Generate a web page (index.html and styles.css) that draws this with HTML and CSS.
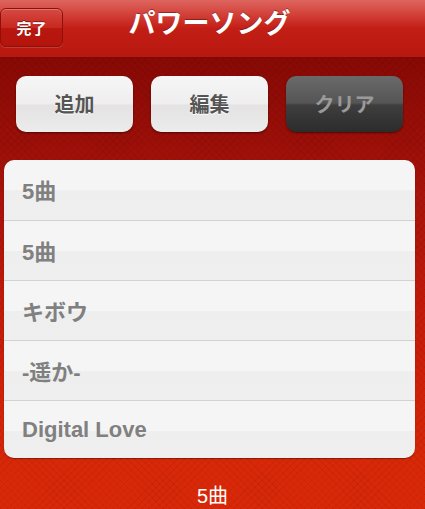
FILE: index.html
```html
<!DOCTYPE html>
<html>
<head>
    <meta name="viewport" content="width=device-width, initial-scale=1.0">
    <title>パワーソング</title>
    <link rel="stylesheet" href="styles.css">
</head>
<body>
    <div class="navbar">
        <a class="done">完了</a>
        <h1 class="title">パワーソング</h1>
    </div>

    <div class="main">
        <div class="tools">
            <a class="btn">追加</a>
            <a class="btn">編集</a>
            <a class="btn dark">クリア</a>
        </div>

        <ul class="songs">
            <li>5曲</li>
            <li>5曲</li>
            <li>キボウ</li>
            <li>-遥か-</li>
            <li>Digital Love</li>
        </ul>

        <p class="count">5曲</p>
    </div>
</body>
</html>
```

FILE: styles.css
```css
body {
    margin: 0;
    width: 425px;
    height: 509px;
    overflow: hidden;
    font-family: "Liberation Sans", "Noto Sans CJK JP", sans-serif;
    background: #d92808;
}

.navbar {
    height: 57px;
    display: flex;
    align-items: center;
    position: relative;
    background: linear-gradient(#de6660 0%, #cf3a32 30%, #c21e16 50%, #b8180f 100%);
    border-bottom: 1px solid #7a0a06;
}

.done {
    margin-top: -2px;
    width: 63px;
    height: 39px;
    box-sizing: border-box;
    border: 1px solid #8e100a;
    border-radius: 6px;
    background: linear-gradient(#d64a44 0%, #c8281f 50%, #b9170f 51%, #b3150d 100%);
    box-shadow: inset 0 1px 0 rgba(255,255,255,0.25), 0 1px 0 rgba(255,255,255,0.15);
    color: #fff;
    font-size: 15px;
    font-weight: bold;
    display: flex;
    align-items: center;
    justify-content: center;
    text-shadow: 0 -1px 0 rgba(0,0,0,0.4);
}

.title {
    position: absolute;
    left: 0;
    right: 0;
    top: 4px;
    margin: 0;
    padding-right: 6px;
    text-align: center;
    color: #fff;
    font-size: 27px;
    font-weight: bold;
    line-height: 40px;
    text-shadow: 0 -1px 0 rgba(0,0,0,0.35);
    pointer-events: none;
}

.main {
    height: 451px;
    background:
        repeating-linear-gradient(45deg, rgba(0,0,0,0.05) 0 1px, transparent 1px 5px),
        repeating-linear-gradient(-45deg, rgba(0,0,0,0.05) 0 1px, transparent 1px 5px),
        linear-gradient(#880905 0%, #a8130a 30%, #c81c0a 60%, #d92808 90%);
    display: flex;
    flex-direction: column;
}

.tools {
    display: flex;
    gap: 18px;
    padding: 18px 22px 0 16px;
}

.btn {
    width: 117px;
    height: 56px;
    box-sizing: border-box;
    border-radius: 10px;
    background: linear-gradient(#f6f6f6 0%, #eeeeee 50%, #e4e2e2 52%, #ececec 100%);
    box-shadow: 0 1px 2px rgba(0,0,0,0.5);
    color: #555;
    font-size: 20px;
    font-weight: bold;
    display: flex;
    align-items: center;
    justify-content: center;
    padding-bottom: 2px;
    text-shadow: 0 1px 0 #fff;
}

.btn.dark {
    background: linear-gradient(#6a6a6a 0%, #555 48%, #3e3e3e 52%, #2c2c2c 100%);
    color: #9a9a9a;
    text-shadow: none;
}

.songs {
    list-style: none;
    margin: 28px 10px 0 4px;
    padding: 0;
    border-radius: 10px;
    overflow: hidden;
    box-shadow: 0 1px 1px rgba(0,0,0,0.35);
}

.songs li {
    height: 60px;
    box-sizing: border-box;
    padding-left: 18px;
    padding-bottom: 2px;
    display: flex;
    align-items: center;
    background: linear-gradient(#f5f5f5 0%, #f5f5f5 50%, #eeeeee 51%, #efefef 100%);
    border-top: 1px solid #d2d2d2;
    color: #808080;
    font-size: 22px;
    font-weight: bold;
}

.songs li:first-child {
    border-top: none;
}

.count {
    margin: 22px 0 0;
    text-align: center;
    color: #fff;
    font-size: 20px;
}
```
